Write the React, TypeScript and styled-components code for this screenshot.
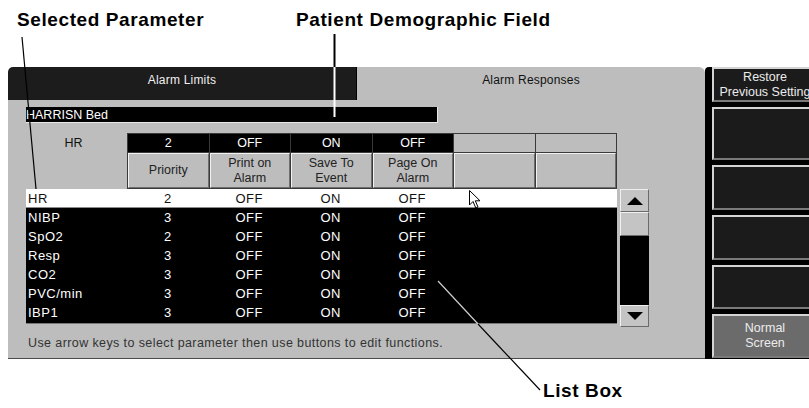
import styled, { createGlobalStyle } from "styled-components";

const GlobalStyle = createGlobalStyle`
  html, body {
    margin: 0;
    padding: 0;
    background: #ffffff;
    overflow: hidden;
  }
  body {
    font-family: "Liberation Sans", Arial, sans-serif;
  }
`;

const Page = styled.div`
  position: relative;
  width: 809px;
  height: 408px;
  overflow: hidden;
  display: flex;
  flex-direction: column;
`;

const TopCallouts = styled.div`
  height: 67px;
  box-sizing: border-box;
  padding: 9px 0 0 17px;
  display: grid;
  grid-template-columns: 279px 1fr;
  align-items: start;
`;

const Callout = styled.div`
  font-family: "Liberation Sans", Arial, sans-serif;
  font-weight: bold;
  font-size: 19px;
  line-height: 22px;
  letter-spacing: 0.6px;
  color: #000;
  white-space: nowrap;
`;

const BottomCallout = styled(Callout)`
  padding: 21px 0 0 543px;
`;

const Monitor = styled.div`
  display: flex;
  height: 292px;
  padding-left: 8px;
`;

const Panel = styled.div`
  width: 697px;
  display: flex;
  flex-direction: column;
`;

const TabRow = styled.div`
  display: flex;
  height: 33px;
`;

const Tab = styled.div<{ $active?: boolean }>`
  box-sizing: border-box;
  width: ${(p) => (p.$active ? "348px" : "349px")};
  padding-top: 6px;
  text-align: center;
  font-size: 12px;
  line-height: 15px;
  letter-spacing: 0.2px;
  background: ${(p) => (p.$active ? "#bdbdbd" : "#1c1c1c")};
  color: ${(p) => (p.$active ? "#111" : "#f0f0f0")};
  border-radius: ${(p) => (p.$active ? "0 6px 0 0" : "5px 0 0 0")};
  border-right: ${(p) => (p.$active ? "none" : "1px solid #000")};
`;

const Body = styled.div`
  flex: 1;
  box-sizing: border-box;
  background: #bdbdbd;
  padding: 7px 0 0 18px;
  border-bottom: 1px solid #4a4a4a;
  display: flex;
  flex-direction: column;
`;

const PatientField = styled.div`
  box-sizing: border-box;
  width: 412px;
  height: 16px;
  background: #000;
  color: #fff;
  font-size: 12.5px;
  line-height: 16px;
  border-bottom: 1px solid #e8e8e8;
  border-right: 1px solid #e8e8e8;
`;

const HeaderArea = styled.div`
  display: flex;
  margin-top: 10px;
`;

const SelectedLabel = styled.div`
  width: 101px;
  padding-right: 6px;
  box-sizing: border-box;
  text-align: center;
  font-size: 12.5px;
  line-height: 18px;
  padding-top: 1px;
  color: #111;
`;

const HeaderGrid = styled.div`
  width: 490px;
  display: grid;
  grid-template-columns: repeat(6, 1fr);
  grid-template-rows: 18px 35px;
  gap: 1px;
  padding: 1px;
  box-sizing: border-box;
  height: 56px;
  background: #3a3a3a;
`;

const ValueCell = styled.div<{ $filled?: boolean }>`
  background: ${(p) => (p.$filled ? "#000" : "#bdbdbd")};
  color: #fff;
  font-size: 12.5px;
  line-height: 18px;
  text-align: center;
`;

const LabelCell = styled.div`
  box-sizing: border-box;
  background: #bdbdbd;
  border-top: 1px solid #f2f2f2;
  border-left: 1px solid #f2f2f2;
  border-bottom: 1px solid #6e6e6e;
  border-right: 1px solid #6e6e6e;
  display: flex;
  flex-direction: column;
  align-items: center;
  justify-content: center;
  text-align: center;
  font-size: 12.5px;
  line-height: 15px;
  color: #222;
`;

const ListRow = styled.div`
  display: flex;
  align-items: flex-start;
`;

const ListBox = styled.div`
  width: 591px;
  height: 135px;
  background: #000;
  box-sizing: border-box;
  border-bottom: 1px solid #777;
`;

const Row = styled.div<{ $selected?: boolean }>`
  display: grid;
  grid-template-columns: 101px repeat(4, 81.5px) 1fr;
  height: 19px;
  align-items: center;
  font-size: 13px;
  letter-spacing: 0.5px;
  background: ${(p) => (p.$selected ? "#fff" : "#000")};
  color: ${(p) => (p.$selected ? "#111" : "#fff")};
  border-bottom: ${(p) => (p.$selected ? "1px solid #8a8a8a" : "none")};
  box-sizing: border-box;
`;

const NameCell = styled.span`
  padding-left: 2px;
`;

const Cell = styled.span`
  text-align: center;
`;

const ScrollBar = styled.div`
  margin-left: 3px;
  width: 29px;
  height: 138px;
  display: flex;
  flex-direction: column;
  background: #000;
`;

const ScrollButton = styled.div<{ $h: number }>`
  box-sizing: border-box;
  height: ${(p) => p.$h}px;
  background: #c4c4c4;
  border-top: 1px solid #f0f0f0;
  border-left: 1px solid #f0f0f0;
  border-bottom: 1px solid #6a6a6a;
  border-right: 1px solid #6a6a6a;
  display: flex;
  align-items: center;
  justify-content: center;
`;

const Track = styled.div`
  flex: 1;
  background: #000;
`;

const Hint = styled.div`
  margin-top: 9px;
  padding-left: 2px;
  font-size: 12.5px;
  letter-spacing: 0.4px;
  line-height: 15px;
  color: #333;
`;

const SideColumn = styled.div`
  width: 104px;
  background: #000;
  padding-left: 7px;
  display: flex;
  flex-direction: column;
  gap: 5px;
  border-top-left-radius: 4px;
`;

const SoftKey = styled.div<{ $h: number; $light?: boolean }>`
  box-sizing: border-box;
  width: 106px;
  flex: none;
  height: ${(p) => p.$h}px;
  background: ${(p) => (p.$light ? "#6b6b6b" : "#1b1b1b")};
  border-top: 2px solid #d4d4d4;
  border-left: 2px solid #d4d4d4;
  border-bottom: 2px solid #7a7a7a;
  border-right: 2px solid #7a7a7a;
  color: #ececec;
  font-size: 12.5px;
  line-height: 15px;
  text-align: center;
  white-space: nowrap;
  display: flex;
  flex-direction: column;
  justify-content: center;
  overflow: hidden;
`;

const Overlay = styled.svg`
  position: absolute;
  left: 0;
  top: 0;
  pointer-events: none;
`;

const Pointer = styled.svg`
  position: absolute;
  left: 469px;
  top: 190px;
`;

const header = [
  { value: "2", label: ["Priority"] },
  { value: "OFF", label: ["Print on", "Alarm"] },
  { value: "ON", label: ["Save To", "Event"] },
  { value: "OFF", label: ["Page On", "Alarm"] },
  { value: "", label: [] },
  { value: "", label: [] },
];

const params = [
  { name: "HR", priority: "2" },
  { name: "NIBP", priority: "3" },
  { name: "SpO2", priority: "2" },
  { name: "Resp", priority: "3" },
  { name: "CO2", priority: "3" },
  { name: "PVC/min", priority: "3" },
  { name: "IBP1", priority: "3" },
];

const keys = [
  { h: 35, lines: ["Restore", "Previous Setting"] },
  { h: 53, lines: [] },
  { h: 45, lines: [] },
  { h: 45, lines: [] },
  { h: 44, lines: [] },
  { h: 44, lines: ["Normal", "Screen"], light: true },
];

export default function App() {
  return (
    <Page>
      <GlobalStyle />
      <TopCallouts>
        <Callout>Selected Parameter</Callout>
        <Callout>Patient Demographic Field</Callout>
      </TopCallouts>

      <Monitor>
        <Panel>
          <TabRow>
            <Tab>Alarm Limits</Tab>
            <Tab $active>Alarm Responses</Tab>
          </TabRow>
          <Body>
            <PatientField>HARRISN Bed</PatientField>
            <HeaderArea>
              <SelectedLabel>HR</SelectedLabel>
              <HeaderGrid>
                {header.map((h, i) => (
                  <ValueCell key={"v" + i} $filled={h.value !== ""}>
                    {h.value}
                  </ValueCell>
                ))}
                {header.map((h, i) => (
                  <LabelCell key={"l" + i}>
                    {h.label.map((l) => (
                      <span key={l}>{l}</span>
                    ))}
                  </LabelCell>
                ))}
              </HeaderGrid>
            </HeaderArea>
            <ListRow>
              <ListBox>
                {params.map((p, i) => (
                  <Row key={p.name} $selected={i === 0}>
                    <NameCell>{p.name}</NameCell>
                    <Cell>{p.priority}</Cell>
                    <Cell>OFF</Cell>
                    <Cell>ON</Cell>
                    <Cell>OFF</Cell>
                  </Row>
                ))}
              </ListBox>
              <ScrollBar>
                <ScrollButton $h={23}>
                  <svg width="16" height="8" viewBox="0 0 16 8">
                    <path d="M8 0 L16 8 L0 8 Z" fill="#000" />
                  </svg>
                </ScrollButton>
                <ScrollButton $h={24} />
                <Track />
                <ScrollButton $h={22}>
                  <svg width="16" height="8" viewBox="0 0 16 8">
                    <path d="M0 0 L16 0 L8 8 Z" fill="#000" />
                  </svg>
                </ScrollButton>
              </ScrollBar>
            </ListRow>
            <Hint>
              Use arrow keys to select parameter then use buttons to edit
              functions.
            </Hint>
          </Body>
        </Panel>
        <SideColumn>
          {keys.map((k, i) => (
            <SoftKey key={i} $h={k.h} $light={k.light}>
              {k.lines.map((l) => (
                <span key={l}>{l}</span>
              ))}
            </SoftKey>
          ))}
        </SideColumn>
      </Monitor>

      <BottomCallout>List Box</BottomCallout>

      {/* leader lines */}
      <Overlay width="809" height="408" viewBox="0 0 809 408">
        <line x1="22" y1="37" x2="36" y2="189" stroke="#000" strokeWidth="1.2" />
        <line x1="334.5" y1="34" x2="334.5" y2="67" stroke="#000" strokeWidth="2" />
        <line x1="334.5" y1="67" x2="334.5" y2="117" stroke="#fff" strokeWidth="2" />
        <line x1="438" y1="281" x2="478" y2="324" stroke="#cfcfcf" strokeWidth="1.2" />
        <line x1="478" y1="324" x2="540" y2="390" stroke="#000" strokeWidth="1.2" />
      </Overlay>

      <Pointer width="12" height="19" viewBox="0 0 12 19">
        <path
          d="M0.5 0.5 L0.5 15 L4 11.5 L6.8 18 L9 17 L6.3 10.8 L11 10.8 Z"
          fill="#fff"
          stroke="#000"
          strokeWidth="1"
          strokeLinejoin="round"
        />
      </Pointer>
    </Page>
  );
}
